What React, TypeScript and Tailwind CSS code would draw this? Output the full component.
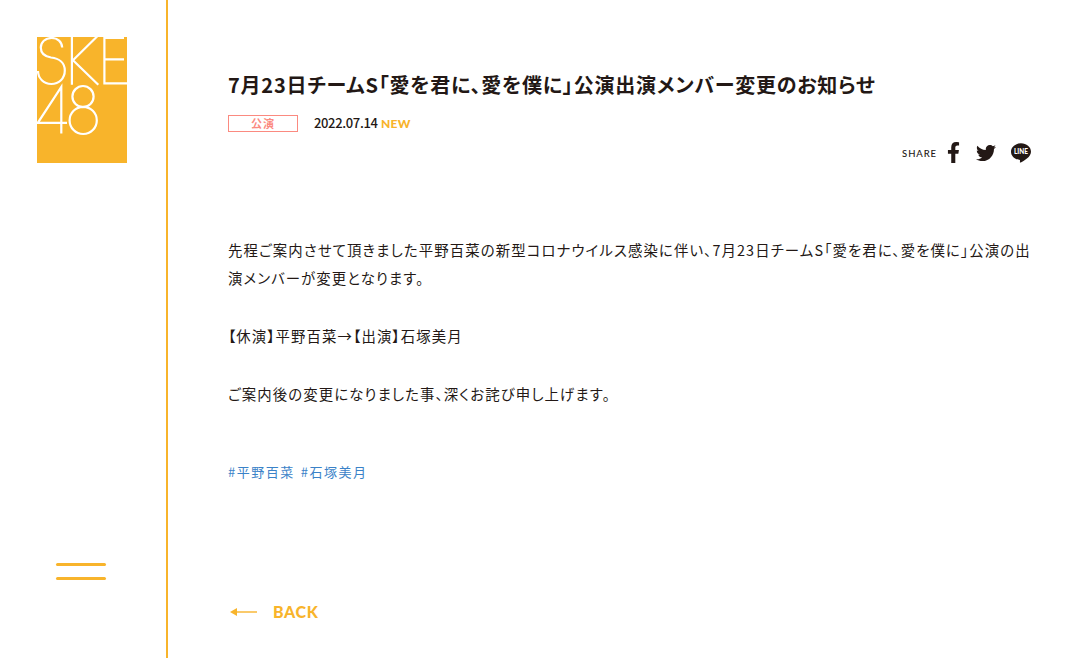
import React from "react";
import { FaFacebookF, FaTwitter } from "react-icons/fa";

const bodyLines = [
  "先程ご案内させて頂きました平野百菜の新型コロナウイルス感染に伴い、7月23日チームS「愛を君に、愛を僕に」公演の出",
  "演メンバーが変更となります。",
  "",
  "【休演】平野百菜→【出演】石塚美月",
  "",
  "ご案内後の変更になりました事、深くお詫び申し上げます。",
];

const tags = ["#平野百菜", "#石塚美月"];

const Logo = () => (
  <svg
    viewBox="0 0 90 126"
    className="w-[90px] h-[126px] bg-[#f8b42b]"
    fill="none"
    stroke="#fff"
    strokeWidth="2.2"
    aria-label="SKE48"
  >
    <path d="M25.2 10.5C24.9 4.8 20.6 1 14.6 1C8.2 1 3.8 5.3 3.8 10.6C3.8 16 7.5 19.6 14 20.5C22.4 21.4 27.8 26.2 27.8 33.5C27.8 41.5 22 47 14.3 47C6.7 47 1 41.5 1 34" />
    <path d="M34.9 0V47.7M60.3 -.7L36 23.3L61.3 47.7" />
    <path d="M87 .8H67.4V46.3H90M67.4 22.4H87" />
    <path d="M24.3 96.5V50L.8 85.9H30" />
    <circle cx="46" cy="59.6" r="10.6" />
    <circle cx="46.2" cy="83.4" r="13.6" />
  </svg>
);

const LineIcon = () => (
  <svg viewBox="0 0 20 20" className="w-5 h-5">
    <path
      fill="#231815"
      d="M10 .3C4.5 .3 0 4 0 8.7C0 12.8 3.5 16.1 8.2 16.8C9.3 17.1 9.1 17.6 8.9 19C8.8 19.6 9.2 19.7 9.8 19.4C13.4 17.4 20 13.9 20 8.7C20 4 15.5 .3 10 .3Z"
    />
    <text
      x="10"
      y="11.3"
      textAnchor="middle"
      fill="#fff"
      fontSize="7.2"
      fontWeight="900"
      fontFamily="Lato, sans-serif"
      textLength="14"
      lengthAdjust="spacingAndGlyphs"
    >
      LINE
    </text>
  </svg>
);

const Sidebar = () => (
  <aside className="w-[168px] shrink-0 border-r-2 border-[#f8b42b] flex flex-col justify-between pt-[37px] pb-[78px]">
    <a href="#" className="ml-[37px]">
      <Logo />
    </a>
    <button type="button" aria-label="menu" className="ml-14 w-[50px] flex flex-col gap-[11px]">
      <span className="h-[3px] w-full rounded-full bg-[#f8b42b]" />
      <span className="h-[3px] w-full rounded-full bg-[#f8b42b]" />
    </button>
  </aside>
);

const App = () => {
  return (
    <div className="flex h-[658px] overflow-hidden bg-white text-[#231815] font-['Noto_Sans_CJK_JP',sans-serif]">
      <Sidebar />
      <main className="flex-1 pl-[60px] pr-[56px] pt-[70px]">
        <h1 className="h-[30px] text-[20px] leading-[30px] font-bold whitespace-nowrap tracking-[0.78px] [font-feature-settings:'palt']">
          7月23日チームS「愛を君に、愛を僕に」公演出演メンバー変更のお知らせ
        </h1>

        <div className="flex items-center h-[18px] mt-[14px]">
          <span className="w-[70px] h-[17px] border border-[#fb8a80] text-[#fb8a80] text-[11px] leading-[15px] font-bold text-center tracking-[1px]">
            公演
          </span>
          <time className="ml-4 w-[67px] text-[13px] leading-[18px] tracking-[-0.35px] font-medium">
            2022.07.14
          </time>
          <span className="text-[12px] leading-[18px] tracking-[0.3px] mt-px font-[Lato,sans-serif] font-black text-[#f8b42b]">
            NEW
          </span>
        </div>

        <div className="flex justify-end items-center h-5 mt-[11px]">
          <span className="text-[9.5px] leading-5 tracking-[0.9px] mt-px font-[Lato,sans-serif] font-medium mr-[10px]">SHARE</span>
          <FaFacebookF className="w-[13px] h-[21px] -mt-px" />
          <FaTwitter className="w-5 h-5 ml-4 mr-[15px] -mt-px" />
          <LineIcon />
        </div>

        <div className="mt-[72.6px] text-[14.4px] leading-[28.8px] tracking-[1.11px] [font-feature-settings:'palt']">
          {bodyLines.map((line, index) => (
            <p key={index} className="h-[28.8px] whitespace-nowrap">
              {line}
            </p>
          ))}
        </div>

        <div className="flex gap-[6px] mt-[53.6px] h-5 text-[13px] leading-5 tracking-[1.5px] text-[#3a82c8] [font-feature-settings:'palt']">
          {tags.map((tag) => (
            <a key={tag} href="#">
              {tag}
            </a>
          ))}
        </div>

        <a href="#" className="flex items-center h-5 mt-[120px] text-[#f8b42b]">
          <svg viewBox="0 0 27 8" className="w-[27px] h-2 ml-[2px]" fill="currentColor">
            <path d="M0 4L7 0V8Z" />
            <path d="M6 3.3H27V4.7H6Z" />
          </svg>
          <span className="ml-4 text-[16px] leading-5 tracking-[0.6px] font-[Lato,sans-serif] font-black">BACK</span>
        </a>
      </main>
    </div>
  );
};

export default App;
